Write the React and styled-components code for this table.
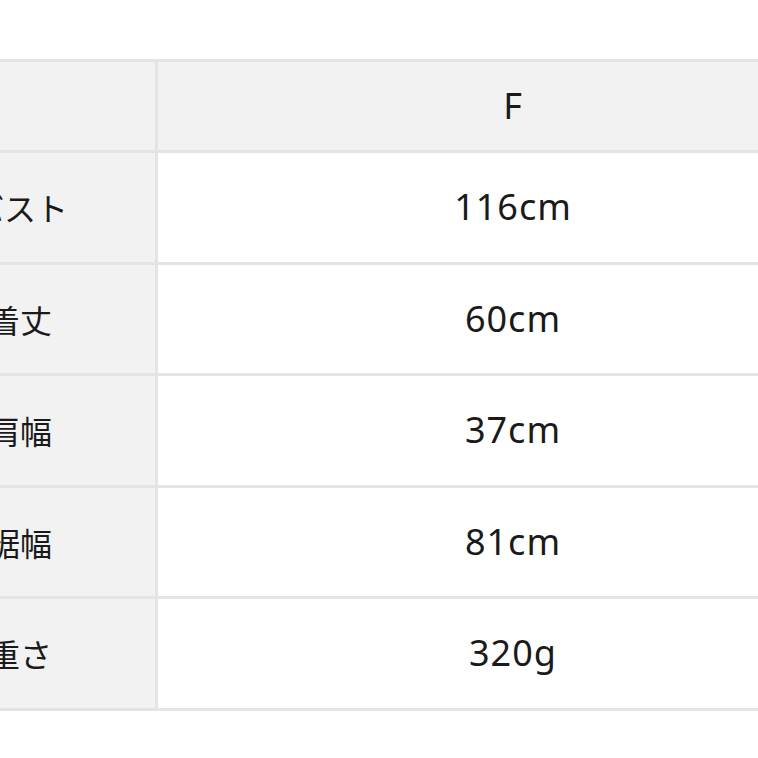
import React from 'react';
import styled, { createGlobalStyle } from 'styled-components';

const GlobalStyle = createGlobalStyle`
  html, body {
    margin: 0;
    padding: 0;
    background: #fff;
    overflow: hidden;
  }
  body {
    font-family: "Noto Sans", "Noto Sans CJK JP", sans-serif;
    color: #1a1a1a;
  }
`;

const Page = styled.div`
  width: 758px;
  height: 758px;
  padding-top: 59px;
  box-sizing: border-box;
`;

const SizeTable = styled.div`
  display: grid;
  grid-template-columns: 270px 710px;
  grid-template-rows: 88px repeat(5, 108.5px);
  gap: 3px;
  padding: 3px 0;
  margin-left: -115px;
  width: 983px;
  background: #e4e4e4;
`;

const Cell = styled.div`
  display: flex;
  align-items: center;
  justify-content: center;
  background: ${({ $head }) => ($head ? '#f2f2f2' : '#fff')};
  font-size: 36px;
  line-height: 1;
  letter-spacing: 1px;
`;

const Label = styled(Cell)`
  font-family: "Noto Sans CJK JP", sans-serif;
  font-size: 32px;
  letter-spacing: 0;
`;

const rows = [
  ['バスト', '116cm'],
  ['着丈', '60cm'],
  ['肩幅', '37cm'],
  ['裾幅', '81cm'],
  ['重さ', '320g'],
];

export default function App() {
  return (
    <>
      <GlobalStyle />
      <Page>
        <SizeTable>
          <Cell $head />
          <Cell $head>F</Cell>
          {rows.map(([label, value]) => (
            <React.Fragment key={label}>
              <Label $head>{label}</Label>
              <Cell>{value}</Cell>
            </React.Fragment>
          ))}
        </SizeTable>
      </Page>
    </>
  );
}
